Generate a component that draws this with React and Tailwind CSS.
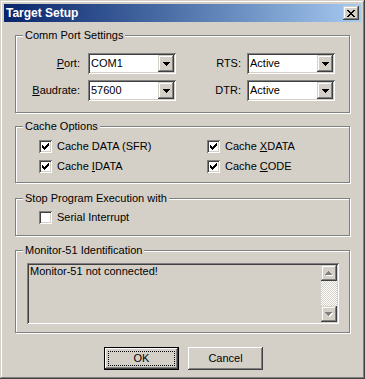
import React from "react";

const SUNKEN =
  "shadow-[inset_1px_1px_0_#808080,inset_-1px_-1px_0_#ffffff,inset_2px_2px_0_#404040,inset_-2px_-2px_0_#d4d0c8]";
const RAISED =
  "shadow-[inset_-1px_-1px_0_#404040,inset_1px_1px_0_#d4d0c8,inset_-2px_-2px_0_#808080,inset_2px_2px_0_#ffffff]";
const BUTTON =
  "shadow-[inset_-1px_-1px_0_#404040,inset_1px_1px_0_#ffffff,inset_-2px_-2px_0_#808080,inset_2px_2px_0_#d4d0c8]";

function Pixels({ rows, color = "#000", className = "" }) {
  const w = rows[0].length;
  const h = rows.length;
  const rects = [];
  rows.forEach((r, y) =>
    r.split("").forEach((c, x) => {
      if (c === "X") rects.push(<rect key={`${x}-${y}`} x={x} y={y} width="1" height="1" fill={color} />);
    })
  );
  return (
    <svg width={w} height={h} viewBox={`0 0 ${w} ${h}`} shapeRendering="crispEdges" className={`block ${className}`}>
      {rects}
    </svg>
  );
}

const CHECK = ["......X", ".....XX", "X...XXX", "XX.XXX.", "XXXXX..", ".XXX...", "..X...."];
const DOWN = ["XXXXXXX", ".XXXXX.", "..XXX..", "...X..."];
const UP = ["...X...", "..XXX..", ".XXXXX.", "XXXXXXX"];
const CLOSE = ["XX....XX", ".XX..XX.", "..XXXX..", "...XX...", "..XXXX..", ".XX..XX.", "XX....XX"];

function DisabledArrow({ rows }) {
  return (
    <div className="relative w-[8px] h-[5px]">
      <div className="absolute left-[1px] top-[1px]">
        <Pixels rows={rows} color="#ffffff" />
      </div>
      <div className="absolute left-0 top-0">
        <Pixels rows={rows} color="#808080" />
      </div>
    </div>
  );
}

function Group({ title, className = "", children }) {
  return (
    <div
      className={`relative w-[335px] border border-[#808080] shadow-[inset_1px_1px_0_#ffffff,1px_1px_0_#ffffff] ${className}`}
    >
      <span className="absolute left-[7px] top-[-7px] bg-[#d4d0c8] px-[2px] leading-[13px] whitespace-nowrap">
        {title}
      </span>
      {children}
    </div>
  );
}

function Combo({ value }) {
  return (
    <div className={`flex h-[21px] w-[88px] bg-white p-[2px] ${SUNKEN}`}>
      <div className="flex-1 pl-[1px] leading-[17px] whitespace-nowrap">{value}</div>
      <div className={`flex h-[17px] w-[16px] items-center justify-center bg-[#d4d0c8] ${RAISED}`}>
        <Pixels rows={DOWN} />
      </div>
    </div>
  );
}

function Check({ checked }) {
  return (
    <div className={`h-[13px] w-[13px] shrink-0 bg-white p-[3px] ${SUNKEN}`}>
      {checked && <Pixels rows={CHECK} />}
    </div>
  );
}

function CheckItem({ checked, children, className = "" }) {
  return (
    <div className={`flex h-[13px] items-center gap-[5px] whitespace-nowrap ${className}`}>
      <Check checked={checked} />
      <span className="leading-[13px]">{children}</span>
    </div>
  );
}

function U({ children }) {
  return <span className="underline underline-offset-[1px]">{children}</span>;
}

export default function App() {
  return (
    <div
      className={`relative h-[379px] w-[365px] bg-[#d4d0c8] p-[4px] text-[11px] leading-[13px] text-black font-['Liberation_Sans',Arial,sans-serif] shadow-[inset_-1px_-1px_0_#404040,inset_1px_1px_0_#d4d0c8,inset_-2px_-2px_0_#808080,inset_2px_2px_0_#ffffff]`}
    >
      {/* Title bar */}
      <div className="flex h-[18px] items-center justify-between bg-linear-to-r from-[#0a246a] to-[#a6caf0] pl-[2px] pr-[2px]">
        <span className="text-[12px] font-bold leading-[18px] text-white">Target Setup</span>
        <div className={`flex h-[14px] w-[16px] items-center justify-center bg-[#d4d0c8] pl-[0px] pt-[0px] ${RAISED}`}>
          <Pixels rows={CLOSE} />
        </div>
      </div>

      {/* Body */}
      <div className="pl-[11px]">
        <Group title="Comm Port Settings" className="mt-[13px] h-[78px]">
          <div className="flex flex-col gap-[6px] pt-[17px]">
            <div className="flex items-center">
              <div className="w-[64px] text-right">
                <U>P</U>ort:
              </div>
              <div className="ml-[8px]">
                <Combo value="COM1" />
              </div>
              <div className="w-[65px] text-right">RTS:</div>
              <div className="ml-[6px]">
                <Combo value="Active" />
              </div>
            </div>
            <div className="flex items-center">
              <div className="w-[64px] text-right">
                <U>B</U>audrate:
              </div>
              <div className="ml-[8px]">
                <Combo value="57600" />
              </div>
              <div className="w-[65px] text-right">DTR:</div>
              <div className="ml-[6px]">
                <Combo value="Active" />
              </div>
            </div>
          </div>
        </Group>

        <Group title="Cache Options" className="mt-[13px] h-[57px]">
          <div className="grid grid-cols-[168px_1fr] gap-y-[7px] pl-[23px] pt-[13px]">
            <CheckItem checked>Cache DATA (SFR)</CheckItem>
            <CheckItem checked>
              Cache <U>X</U>DATA
            </CheckItem>
            <CheckItem checked>
              Cache <U>I</U>DATA
            </CheckItem>
            <CheckItem checked>
              Cache <U>C</U>ODE
            </CheckItem>
          </div>
        </Group>

        <Group title="Stop Program Execution with" className="mt-[15px] h-[38px]">
          <div className="pl-[23px] pt-[12px]">
            <CheckItem checked={false}>Serial Interrupt</CheckItem>
          </div>
        </Group>

        <Group title="Monitor-51 Identification" className="mt-[14px] h-[83px]">
          <div className="pl-[11px] pt-[12px]">
            <div className={`flex h-[61px] w-[312px] bg-[#d4d0c8] p-[2px] ${SUNKEN}`}>
              <div className="flex-1 pl-[1px] leading-[13px]">Monitor-51 not connected!</div>
              <div className="flex w-[16px] flex-col">
                <div className={`flex h-[16px] w-[16px] items-center justify-center bg-[#d4d0c8] ${RAISED}`}>
                  <DisabledArrow rows={UP} />
                </div>
                <div className="flex-1 bg-[repeating-conic-gradient(#ffffff_0_25%,#d4d0c8_0_50%)] bg-[length:2px_2px]" />
                <div className={`flex h-[16px] w-[16px] items-center justify-center bg-[#d4d0c8] ${RAISED}`}>
                  <DisabledArrow rows={DOWN} />
                </div>
              </div>
            </div>
          </div>
        </Group>

        {/* Buttons */}
        <div className="mt-[14px] flex gap-[9px] pl-[89px]">
          <div className="h-[23px] w-[75px] border border-black">
            <div className={`h-full w-full p-[3px] ${BUTTON}`}>
              <div className="flex h-full w-full items-center justify-center border border-dotted border-black leading-[13px]">
                OK
              </div>
            </div>
          </div>
          <div className={`flex h-[23px] w-[75px] items-center justify-center ${BUTTON}`}>Cancel</div>
        </div>
      </div>
    </div>
  );
}
